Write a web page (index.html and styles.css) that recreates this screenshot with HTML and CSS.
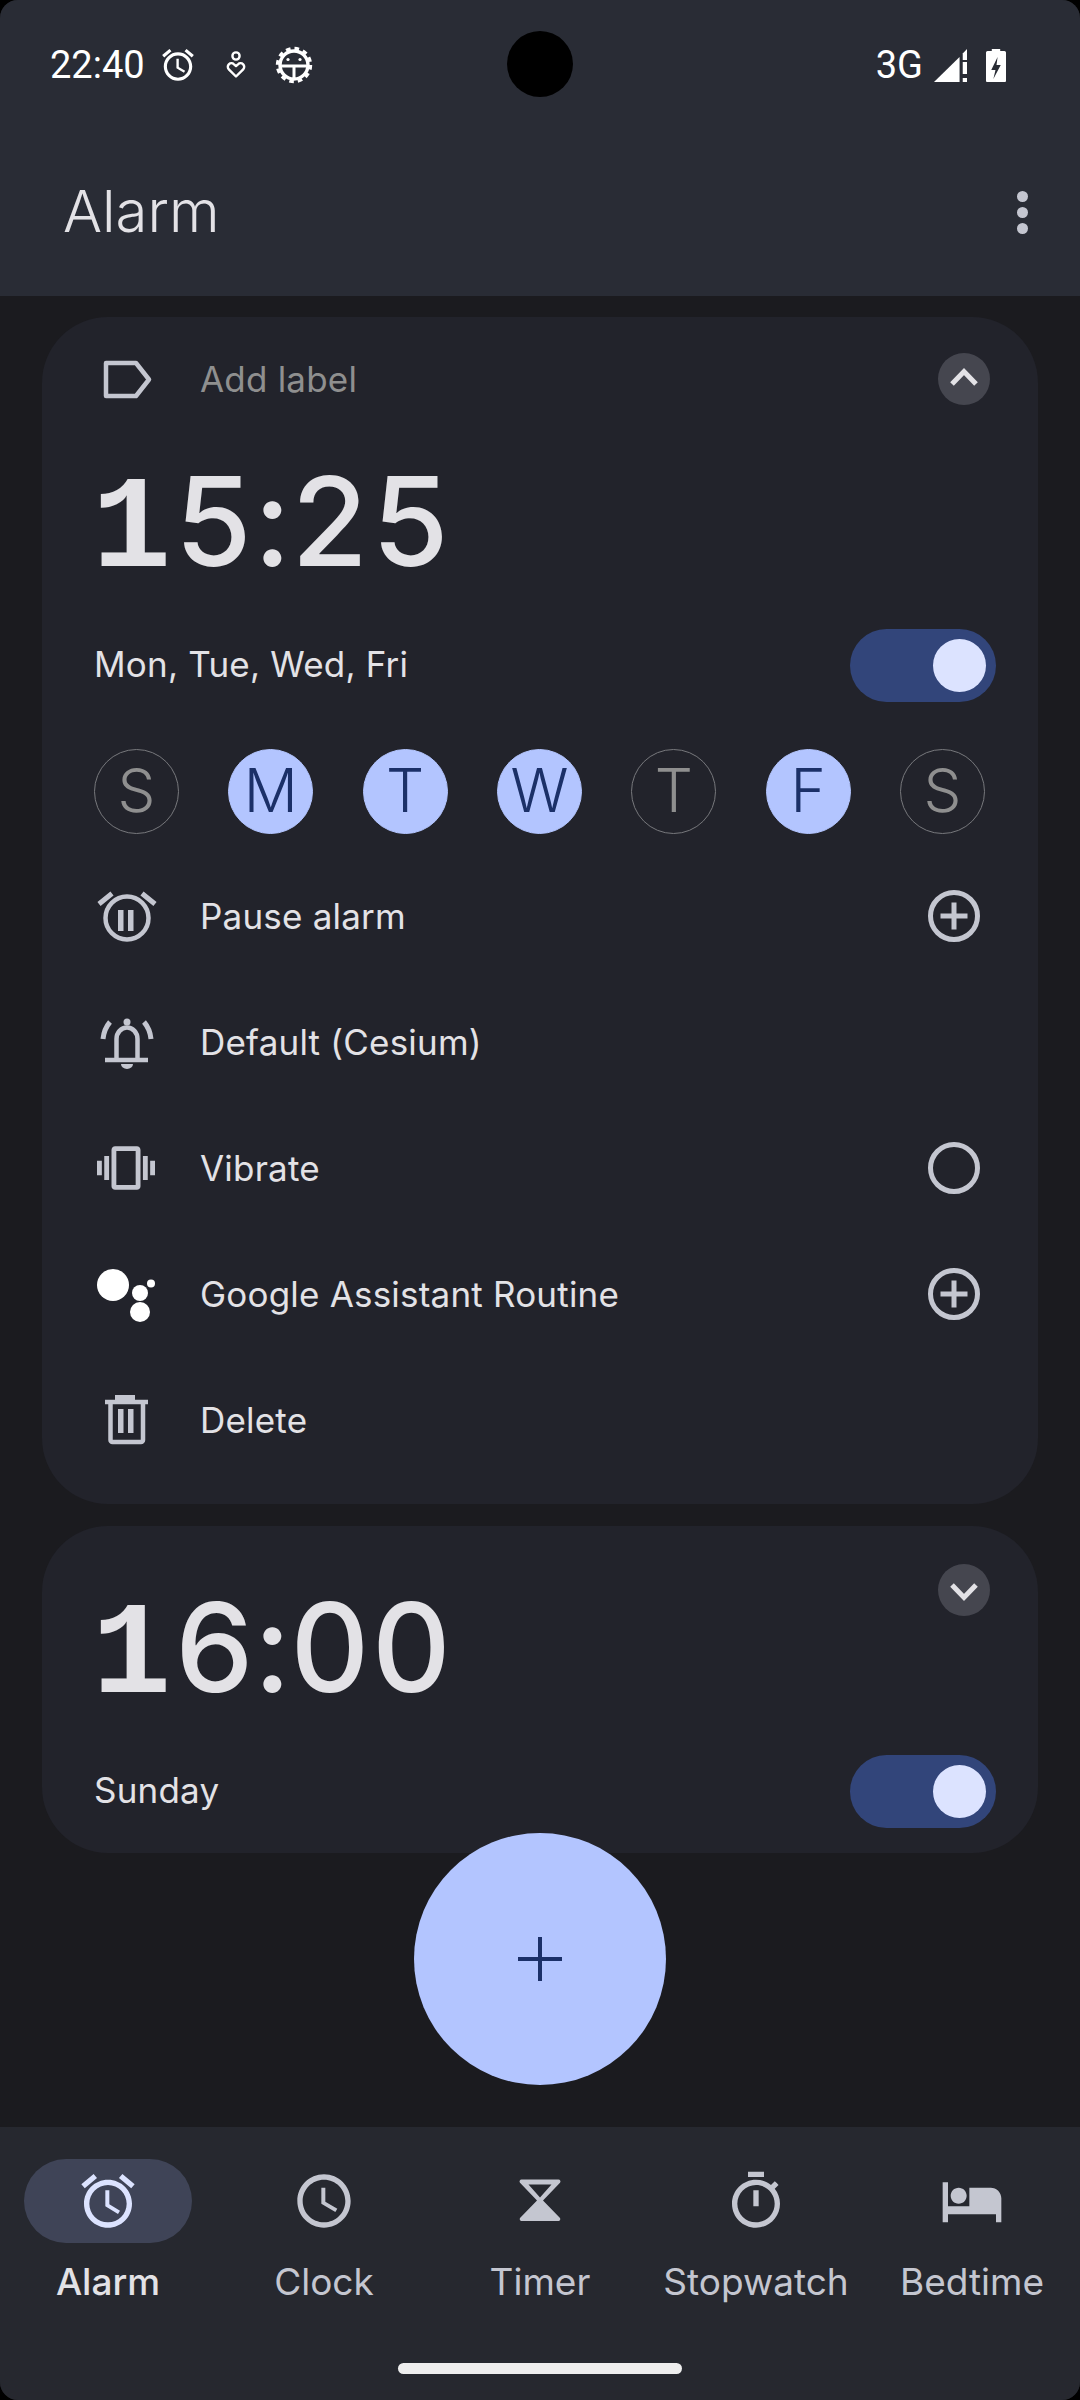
FILE: index.html
```html
<!DOCTYPE html>
<html lang="en">
<head>
    <meta charset="UTF-8">
    <meta name="viewport" content="width=device-width, initial-scale=1.0">
    <title>Alarm</title>
    <link rel="stylesheet" href="styles.css">
</head>
<body>
<div class="screen">
    <div class="camera"></div>

    <header class="header">
        <div class="status">
            <span class="status-time">22:40</span>
            <svg class="st-alarm" viewBox="0 0 24 24"><path d="M22 5.72l-4.6-3.86-1.29 1.53 4.6 3.86L22 5.72zM7.88 3.39L6.6 1.86 2 5.71l1.29 1.53 4.59-3.85zM12.5 8H11v6l4.75 2.85.75-1.23-4-2.37V8zM12 4c-4.97 0-9 4.03-9 9s4.03 9 9 9 9-4.03 9-9-4.03-9-9-9zm0 16c-3.87 0-7-3.13-7-7s3.13-7 7-7 7 3.13 7 7-3.13 7-7 7z"/></svg>
            <svg class="st-heart" viewBox="0 0 24 32"><circle cx="12" cy="7" r="3.6" fill="none" stroke="#fff" stroke-width="2.4"/><path d="M12 27.5l-7.2-7.2a3.6 3.6 0 0 1 0-5 3.7 3.7 0 0 1 5.2 0L12 17l2-1.7a3.7 3.7 0 0 1 5.2 0 3.6 3.6 0 0 1 0 5z" fill="none" stroke="#fff" stroke-width="2.4" stroke-linejoin="round"/></svg>
            <svg class="st-bug" viewBox="0 0 40 40"><circle cx="20" cy="20" r="14" fill="none" stroke="#fff" stroke-width="3.4"/><circle cx="20" cy="20" r="16.5" fill="none" stroke="#fff" stroke-width="3.4" stroke-dasharray="4.6 4.04"/><path d="M6 21h28M20 21v13" stroke="#fff" stroke-width="3"/><circle cx="14" cy="14.5" r="1.6" fill="#fff"/><circle cx="26" cy="14.5" r="1.6" fill="#fff"/></svg>
            <span class="spacer"></span>
            <span class="status-net">3G</span>
            <svg class="st-signal" viewBox="0 0 31 33" preserveAspectRatio="none"><path d="M0 33L24 33V8z"/><path d="M27 4.5L31 0V11H27z"/><path d="M27 13h4v12h-4zM27 29h4v4h-4z"/></svg>
            <svg class="st-battery" viewBox="0 0 19 33" preserveAspectRatio="none"><path fill-rule="evenodd" d="M5.500 0h8v2h4a1.500 1.500 0 0 1 1.500 1.500V32a1 1 0 0 1-1 1H1a1 1 0 0 1-1-1V3.500A1.500 1.500 0 0 1 1.500 2h4zM11 8L5 21h4l-2 9 7-14h-4z"/></svg>
        </div>
        <div class="appbar">
            <h1 class="title">Alarm</h1>
            <div class="more"><i></i><i></i><i></i></div>
        </div>
    </header>

    <main class="content">
        <!-- expanded alarm -->
        <section class="card">
            <div class="label-row">
                <svg class="row-icon" viewBox="0 0 64 64"><path d="M12 16H42L55 32.500 42 49H12z" fill="none" stroke="#c4c6d0" stroke-width="4.500" stroke-linejoin="round"/></svg>
                <span class="add-label">Add label</span>
                <span class="chevron">
                    <svg viewBox="0 0 52 52"><path d="M14 31L26 18.500 38 31" fill="none" stroke="#e3e2e6" stroke-width="5"/></svg>
                </span>
            </div>
            <div class="time"><span class="one">1</span>5:25</div>
            <div class="sched-row">
                <span class="sched">Mon, Tue, Wed, Fri</span>
                <span class="switch"><span class="thumb"></span></span>
            </div>
            <div class="days">
                <span class="day">S</span>
                <span class="day on">M</span>
                <span class="day on">T</span>
                <span class="day on">W</span>
                <span class="day">T</span>
                <span class="day on">F</span>
                <span class="day">S</span>
            </div>
            <div class="options">
                <div class="option">
                    <svg class="row-icon" viewBox="0 0 64 64"><circle cx="33" cy="34" r="21.500" fill="none" stroke="#c4c6d0" stroke-width="4.500"/><path d="M5 20L18 9.500M61 20L48 9.500" stroke="#c4c6d0" stroke-width="5"/><path d="M24 26h5.500v21H24zM34 26h5.500v21H34z" fill="#c4c6d0"/></svg>
                    <span class="option-text">Pause alarm</span>
                    <svg class="row-icon" viewBox="0 0 64 64"><circle cx="33" cy="32" r="23.500" fill="none" stroke="#c4c6d0" stroke-width="5"/><path d="M33 18.500v27M19.500 32h27" stroke="#c4c6d0" stroke-width="5"/></svg>
                </div>
                <div class="option">
                    <svg class="row-icon" viewBox="0 0 64 64"><path d="M22.500 50V29a10.500 11.500 0 0 1 21 0V50" fill="none" stroke="#c4c6d0" stroke-width="4.500"/><circle cx="33" cy="12" r="3.500" fill="#c4c6d0"/><path d="M11 50H54" stroke="#c4c6d0" stroke-width="4.500"/><path d="M27 54h12a6 5 0 0 1-12 0z" fill="#c4c6d0"/><path d="M9 29Q10 19 16 12M57 29Q56 19 50 12" fill="none" stroke="#c4c6d0" stroke-width="5"/></svg>
                    <span class="option-text">Default (Cesium)</span>
                </div>
                <div class="option">
                    <span class="icon-box"><svg class="vibrate" viewBox="0 0 24 24"><path d="M0 15h2V9H0v6zm3 2h2V7H3v10zm19-8v6h2V9h-2zm-3 8h2V7h-2v10zM16.500 3h-9C6.670 3 6 3.670 6 4.500v15c0 .83.67 1.500 1.500 1.500h9c.83 0 1.500-.67 1.500-1.500v-15c0-.83-.67-1.500-1.500-1.500zM16 19H8V5h8v14z"/></svg></span>
                    <span class="option-text">Vibrate</span>
                    <svg class="row-icon" viewBox="0 0 64 64"><circle cx="33" cy="32" r="23.500" fill="none" stroke="#c4c6d0" stroke-width="5"/></svg>
                </div>
                <div class="option">
                    <svg class="row-icon" viewBox="0 0 64 64"><circle cx="19" cy="23" r="16" fill="#fff"/><circle cx="46" cy="31" r="8" fill="#fff"/><circle cx="46" cy="50" r="10" fill="#fff"/><circle cx="57" cy="21.500" r="4" fill="#fff"/></svg>
                    <span class="option-text">Google Assistant Routine</span>
                    <svg class="row-icon" viewBox="0 0 64 64"><circle cx="33" cy="32" r="23.500" fill="none" stroke="#c4c6d0" stroke-width="5"/><path d="M33 18.500v27M19.500 32h27" stroke="#c4c6d0" stroke-width="5"/></svg>
                </div>
                <div class="option">
                    <svg class="row-icon" viewBox="0 0 64 64"><path d="M11 14H54" stroke="#c4c6d0" stroke-width="4.500"/><path d="M21 7h20v5H21zM24 21h5.500v24H24zM34 21h5.500v24H34z" fill="#c4c6d0"/><path d="M16.500 14V52a2 2 0 0 0 2 2H47a2 2 0 0 0 2-2V14" fill="none" stroke="#c4c6d0" stroke-width="4.500"/></svg>
                    <span class="option-text">Delete</span>
                </div>
            </div>
        </section>

        <!-- collapsed alarm -->
        <section class="card card-small">
            <div class="small-head">
                <div class="time"><span class="one">1</span>6:00</div>
                <span class="chevron">
                    <svg viewBox="0 0 52 52"><path d="M14 21L26 33.500 38 21" fill="none" stroke="#e3e2e6" stroke-width="5"/></svg>
                </span>
            </div>
            <div class="sched-row">
                <span class="sched">Sunday</span>
                <span class="switch"><span class="thumb"></span></span>
            </div>
        </section>

        <button class="fab">
            <svg viewBox="0 0 44 44"><path d="M22 0v44M0 22h44" stroke="#1b3068" stroke-width="4"/></svg>
        </button>
    </main>

    <nav class="nav">
        <div class="tab active">
            <span class="pill"><svg viewBox="0 0 24 24"><path d="M22 5.720l-4.600-3.860-1.290 1.530 4.600 3.860L22 5.720zM7.880 3.390L6.600 1.860 2 5.710l1.290 1.530 4.590-3.850zM12.500 8H11v6l4.750 2.850.75-1.230-4-2.370V8zM12 4c-4.970 0-9 4.030-9 9s4.030 9 9 9 9-4.030 9-9-4.030-9-9-9zm0 16c-3.870 0-7-3.130-7-7s3.130-7 7-7 7 3.130 7 7-3.130 7-7 7z"/></svg></span>
            <span class="tab-text">Alarm</span>
        </div>
        <div class="tab">
            <span class="pill"><svg viewBox="0 0 24 24"><path d="M11.990 2C6.470 2 2 6.480 2 12s4.470 10 9.990 10C17.520 22 22 17.520 22 12S17.520 2 11.990 2zM12 20c-4.420 0-8-3.580-8-8s3.580-8 8-8 8 3.580 8 8-3.580 8-8 8zm.5-13H11v6l5.250 3.150.75-1.230-4.500-2.670z"/></svg></span>
            <span class="tab-text">Clock</span>
        </div>
        <div class="tab">
            <span class="pill"><svg viewBox="-1.500 -1.500 64 64"><path fill-rule="evenodd" d="M12 9H49a2 2 0 0 1 1.500 3.300L33.500 30 50.500 47.500a2 2 0 0 1-1.500 3H12a2 2 0 0 1-1.500-3L27.500 30 10.500 12.300A2 2 0 0 1 12 9zM19 14L30.500 27 42 14z"/></svg></span>
            <span class="tab-text">Timer</span>
        </div>
        <div class="tab">
            <span class="pill"><svg viewBox="0 0 24 24"><path d="M9 1h6v2H9zM19.030 7.390l1.420-1.420c-.43-.51-.9-.99-1.410-1.410l-1.420 1.420C16.070 4.740 14.120 4 12 4c-4.970 0-9 4.030-9 9s4.030 9 9 9 9-4.030 9-9c0-2.120-.74-4.070-1.970-5.610zM12 20c-3.870 0-7-3.130-7-7s3.130-7 7-7 7 3.130 7 7-3.130 7-7 7zM11 8h2v6h-2z"/></svg></span>
            <span class="tab-text">Stopwatch</span>
        </div>
        <div class="tab">
            <span class="pill"><svg viewBox="0 0 24 24"><path d="M7 13c1.660 0 3-1.340 3-3S8.660 7 7 7s-3 1.340-3 3 1.340 3 3 3zm12-6h-8v7H3V5H1v15h2v-3h18v3h2v-9c0-2.210-1.790-4-4-4z"/></svg></span>
            <span class="tab-text">Bedtime</span>
        </div>
        <div class="home-bar"></div>
    </nav>
</div>
</body>
</html>
```

FILE: styles.css
```css
* {
    box-sizing: border-box;
}
body {
    margin: 0;
    background-color: #000;
    font-family: Inter, "Noto Sans", sans-serif;
    color: #e3e2e6;
}
.screen {
    position: relative;
    width: 1080px;
    height: 2400px;
    display: flex;
    flex-direction: column;
    background-color: #1b1b1f;
    border-radius: 18px;
    overflow: hidden;
}
.camera {
    position: absolute;
    left: 507px;
    top: 31px;
    width: 66px;
    height: 66px;
    border-radius: 50%;
    background-color: #000;
}

/* top area */
.header {
    height: 296px;
    background-color: #292c35;
}
.status {
    height: 128px;
    padding: 2px 74px 0 50px;
    display: flex;
    align-items: center;
    color: #fff;
    fill: #fff;
    font-family: Roboto, sans-serif;
    font-size: 38px;
}
.spacer {
    flex: 1;
}
.st-alarm {
    width: 38px;
    height: 38px;
    margin-left: 14px;
}
.st-heart {
    width: 24px;
    height: 32px;
    margin-left: 27px;
}
.st-bug {
    width: 40px;
    height: 40px;
    margin-left: 26px;
}
.st-signal {
    width: 33px;
    height: 33px;
    margin-left: 11px;
}
.st-battery {
    width: 20px;
    height: 33px;
    margin-left: 19px;
}
.appbar {
    height: 168px;
    padding: 0 52px 0 63px;
    display: flex;
    align-items: center;
    justify-content: space-between;
}
.title {
    margin: 0 0 3px;
    font-size: 58px;
    font-weight: 300;
}
.more {
    display: flex;
    flex-direction: column;
    gap: 5px;
}
.more i {
    width: 11px;
    height: 11px;
    border-radius: 50%;
    background-color: #c4c6d0;
}

/* alarm cards */
.content {
    position: relative;
    flex: 1;
    padding: 21px 42px 0;
    display: flex;
    flex-direction: column;
    gap: 22px;
}
.card {
    padding: 0 53px 21px 52px;
    background-color: #22232b;
    border-radius: 66px;
}
.card-small {
    padding-bottom: 8px;
}
.label-row {
    height: 124px;
    display: flex;
    align-items: center;
}
.row-icon,
.icon-box {
    width: 64px;
    height: 64px;
    flex-shrink: 0;
}
.icon-box {
    display: flex;
    align-items: center;
    justify-content: center;
    fill: #c4c6d0;
}
.vibrate {
    width: 58px;
    height: 58px;
}
.add-label {
    flex: 1;
    margin-left: 42px;
    font-size: 35px;
    letter-spacing: .2px;
    color: #8f8f8f;
}
.chevron {
    width: 52px;
    height: 52px;
    margin-right: -5px;
    flex-shrink: 0;
    border-radius: 50%;
    background-color: #45464f;
}
.chevron svg {
    display: block;
}
.time {
    height: 170px;
    font-size: 124px;
    line-height: 160px;
    font-weight: 500;
    letter-spacing: 1px;
    font-feature-settings: "tnum";
}
.one {
    margin-left: -2px;
    margin-right: 2px;
    font-family: "Liberation Mono", monospace;
    font-size: 132px;
    font-weight: 700;
}
.sched-row {
    height: 108px;
    display: flex;
    align-items: center;
    justify-content: space-between;
}
.sched {
    font-size: 35px;
    letter-spacing: .2px;
    padding-bottom: 2px;
}
.switch {
    width: 146px;
    height: 73px;
    margin-right: -11px;
    padding: 10px;
    display: flex;
    justify-content: flex-end;
    border-radius: 37px;
    background-color: #32457a;
}
.thumb {
    width: 53px;
    height: 53px;
    border-radius: 50%;
    background-color: #dce3ff;
}
.days {
    margin-top: 30px;
    display: flex;
    justify-content: space-between;
}
.day {
    width: 85px;
    height: 85px;
    padding-bottom: 4px;
    display: flex;
    align-items: center;
    justify-content: center;
    border: 1px solid #77787c;
    border-radius: 50%;
    font-size: 60px;
    font-weight: 300;
    color: #8f8f8f;
}
.day.on {
    background-color: #b3c5ff;
    border-color: #b3c5ff;
    color: #1b3068;
}
.options {
    margin-top: 19px;
}
.option {
    height: 126px;
    display: flex;
    align-items: center;
}
.option-text {
    flex: 1;
    margin-left: 42px;
    font-size: 35px;
    letter-spacing: .2px;
}
.small-head {
    height: 211px;
    display: flex;
    justify-content: space-between;
    align-items: flex-start;
}
.small-head .time {
    margin-top: 41px;
}
.small-head .chevron {
    margin-top: 38px;
}
.fab {
    position: absolute;
    left: 414px;
    top: 1537px;
    width: 252px;
    height: 252px;
    padding: 0;
    border: none;
    border-radius: 50%;
    background-color: #b3c5ff;
}
.fab svg {
    display: block;
    width: 44px;
    height: 44px;
    margin: 0 auto;
}

/* bottom tabs */
.nav {
    position: relative;
    height: 273px;
    padding-top: 32px;
    display: flex;
    justify-content: center;
    background-color: #26282f;
}
.tab {
    width: 216px;
    display: flex;
    flex-direction: column;
    align-items: center;
    font-size: 37px;
    color: #c4c6d0;
    fill: #c4c6d0;
}
.pill {
    width: 168px;
    height: 84px;
    display: flex;
    align-items: center;
    justify-content: center;
    border-radius: 42px;
}
.pill svg {
    width: 64px;
    height: 64px;
}
.tab.active {
    color: #e3e2e6;
    font-weight: 500;
    fill: #dce3ff;
}
.tab.active .pill {
    background-color: #3f4457;
}
.tab-text {
    margin-top: 16px;
    white-space: nowrap;
}
.home-bar {
    position: absolute;
    left: 398px;
    top: 236px;
    width: 284px;
    height: 11px;
    border-radius: 6px;
    background-color: #eee;
}
```
